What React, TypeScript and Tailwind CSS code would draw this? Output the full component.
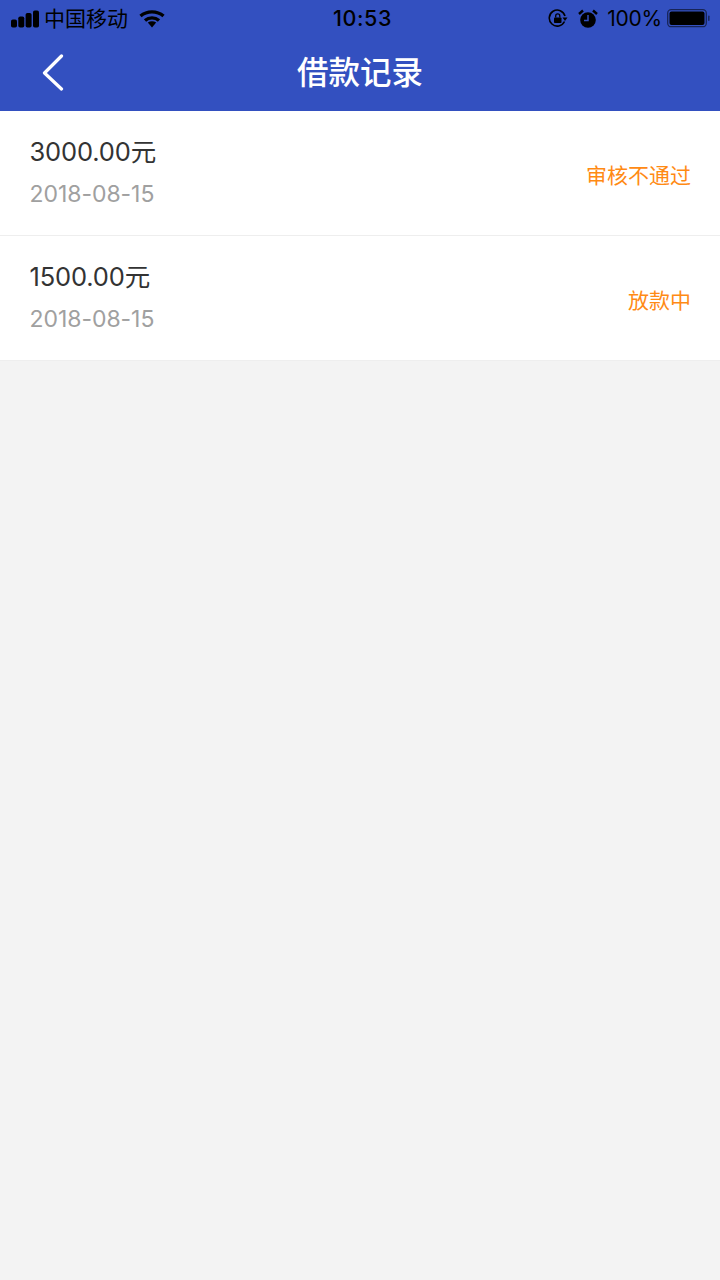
const FONT = "font-['Inter','Noto_Sans_CJK_SC',sans-serif]";

function Signal() {
  return (
    <svg width="28" height="18" viewBox="0 0 28 18" fill="#000">
      <rect x="0" y="9.5" width="6" height="8" rx="1.8" />
      <rect x="7.3" y="6.5" width="6" height="11" rx="1.8" />
      <rect x="14.6" y="3" width="6" height="14.5" rx="1.8" />
      <rect x="22" y="0.5" width="6" height="17" rx="1.8" />
    </svg>
  );
}

function Wifi() {
  return (
    <svg width="26" height="18" viewBox="0 0 26 18" fill="none" stroke="#000" strokeWidth="3.4">
      <path d="M1.5 6C8 0.5 18 0.5 24.5 6" />
      <path d="M6 10.5C10 7 16 7 20 10.5" />
      <path d="M8.8 12.6L13 17.5L17.2 12.6C14.8 10.9 11.2 10.9 8.8 12.6Z" fill="#000" stroke="none" />
    </svg>
  );
}

function RotationLock() {
  return (
    <svg width="20" height="20" viewBox="0 0 20 20" fill="none" stroke="#000" strokeWidth="1.6">
      <path d="M16.5 12.5A8 8 0 1 1 17 7" />
      <path d="M14.5 8.5H19.5L17 12Z" fill="#000" stroke="none" />
      <rect x="6" y="8.5" width="7.5" height="5.5" rx="0.8" fill="#000" stroke="none" />
      <path d="M7.7 8.5V7A2 2 0 0 1 11.8 7V8.5" strokeWidth="1.3" />
    </svg>
  );
}

function Alarm() {
  return (
    <svg width="20" height="20" viewBox="0 0 20 20">
      <circle cx="10" cy="11" r="7.8" fill="#000" />
      <path d="M10 6V11.5H6" fill="none" stroke="#3350c0" strokeWidth="1.5" />
      <path d="M1 5L5 1.5" stroke="#000" strokeWidth="2.4" />
      <path d="M19 5L15 1.5" stroke="#000" strokeWidth="2.4" />
    </svg>
  );
}

function Battery() {
  return (
    <svg width="44" height="20" viewBox="0 0 44 20">
      <rect x="0.7" y="0.7" width="38.6" height="17" rx="3.5" fill="none" stroke="#000" strokeOpacity="0.55" strokeWidth="1.3" />
      <rect x="2.5" y="2.5" width="35" height="13.4" rx="2" fill="#000" />
      <rect x="41" y="6.5" width="1.6" height="5.5" rx="0.8" fill="#000" fillOpacity="0.5" />
    </svg>
  );
}

function Row({ amount, status }: { amount: string; status: string }) {
  return (
    <div className="flex h-[125px] items-center justify-between border-b border-[#eeeeee] bg-white pl-[30px] pr-[29px]">
      <div className="flex flex-col">
        <div className="-ml-[0.5px] -mt-[1px] text-[25.5px] leading-[34px] tracking-[-0.15px] text-[#333333]">{amount}</div>
        <div className="mt-[8px] -ml-[0.5px] text-[23px] leading-[34px] tracking-[-0.05px] text-[#a0a0a0]">2018-08-15</div>
      </div>
      <div className="pt-[5px] text-[21px] leading-[30px] text-[#ff8a14]">{status}</div>
    </div>
  );
}

export default function App() {
  return (
    <div className={`flex min-h-[1280px] flex-col bg-[#f3f3f3] ${FONT}`}>
      <header className="bg-[#3350c0]">
        <div className="flex h-[37px] items-center justify-between pl-[11px] pr-[9px] text-black">
          <div className="flex w-[220px] items-center">
            <Signal />
            <span className="ml-[5px] text-[21px] leading-[37px]">中国移动</span>
            <span className="ml-[11px] flex"><Wifi /></span>
          </div>
          <div className="ml-[3px] text-[21.5px] font-medium leading-[37px] tracking-[0.6px]">10:53</div>
          <div className="flex w-[220px] items-center justify-end">
            <RotationLock />
            <span className="ml-[10px] flex"><Alarm /></span>
            <span className="ml-[9px] text-[21px] leading-[37px] tracking-[-0.2px]">100%</span>
            <span className="ml-[5px] flex"><Battery /></span>
          </div>
        </div>
        <div className="relative flex h-[74px] items-center justify-center">
          <svg className="absolute left-[41px] top-[17px]" width="24" height="38" viewBox="0 0 24 38" fill="none" stroke="#fff" strokeWidth="3.2" strokeLinecap="round" strokeLinejoin="round">
            <path d="M20.5 2L3.5 19L20.5 35" />
          </svg>
          <h1 className="-mt-[3px] text-[31.5px] font-medium leading-[40px] text-white">借款记录</h1>
        </div>
      </header>
      <Row amount="3000.00元" status="审核不通过" />
      <Row amount="1500.00元" status="放款中" />
    </div>
  );
}
